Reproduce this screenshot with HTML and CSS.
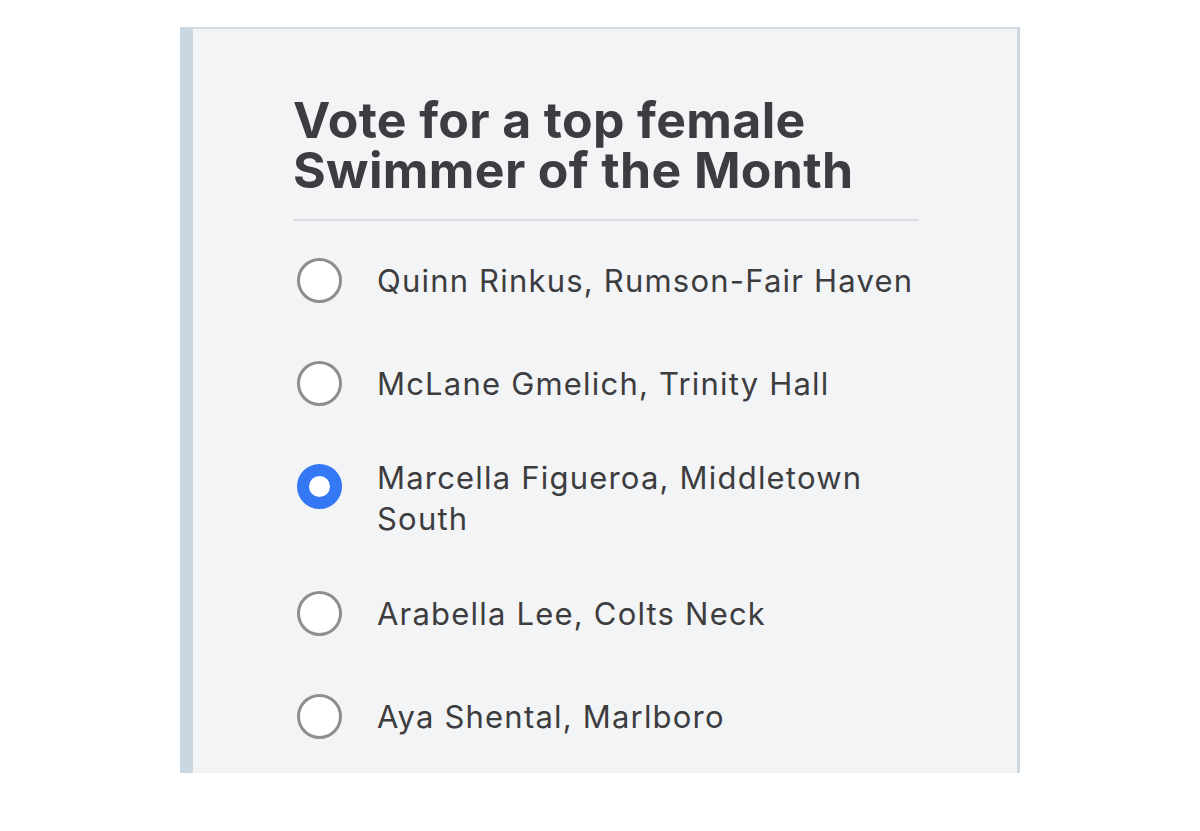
FILE: index.html
```html
<!DOCTYPE html>
<html lang="en">

<head>
    <meta charset="UTF-8">
    <meta name="viewport" content="width=device-width, initial-scale=1.0">
    <title>Swimmer of the Month Poll</title>
    <link rel="stylesheet" href="styles.css">
</head>

<body>

    <div class="poll">
        <h2>Vote for a top female Swimmer of the Month</h2>
        <form id="poll-form" class="options">
            <label class="option">
                <input type="radio" name="swimmer" value="1">
                <span class="radio"></span>
                <span class="name">Quinn Rinkus, Rumson-Fair Haven</span>
            </label>
            <label class="option">
                <input type="radio" name="swimmer" value="2">
                <span class="radio"></span>
                <span class="name">McLane Gmelich, Trinity Hall</span>
            </label>
            <label class="option">
                <input type="radio" name="swimmer" value="3" checked>
                <span class="radio"></span>
                <span class="name">Marcella Figueroa, Middletown South</span>
            </label>
            <label class="option">
                <input type="radio" name="swimmer" value="4">
                <span class="radio"></span>
                <span class="name">Arabella Lee, Colts Neck</span>
            </label>
            <label class="option">
                <input type="radio" name="swimmer" value="5">
                <span class="radio"></span>
                <span class="name">Aya Shental, Marlboro</span>
            </label>
        </form>
    </div>

</body>

</html>
```

FILE: styles.css
```css
body {
    margin: 0;
    background-color: #fff;
    font-family: Inter, "Noto Sans", Arial, sans-serif;
    color: #3c3c3f;
}

.poll {
    width: 840px;
    height: 746px;
    margin: 27px 0 0 180px;
    padding: 0 98px 0 100px;
    box-sizing: border-box;
    background-color: #f3f4f6;
    border-top: 2px solid #d3dbe2;
    border-left: 13px solid #c9d7e2;
    border-right: 3px solid #cdd6de;
}

h2 {
    margin: 0;
    padding: 66px 0 24px;
    font-size: 50px;
    line-height: 50px;
    font-weight: 700;
    letter-spacing: 0.35px;
    color: #3c3d40;
    border-bottom: 2px solid #dcdde0;
}

.options {
    display: flex;
    flex-direction: column;
    gap: 45px;
    padding-top: 30px;
}

.option {
    display: flex;
    align-items: flex-start;
    cursor: pointer;
}

.option input {
    display: none;
}

.radio {
    flex: none;
    width: 84px;
    height: 58px;
    display: flex;
    align-items: center;
    padding-left: 4px;
    box-sizing: border-box;
}

.radio::before {
    content: "";
    width: 45px;
    height: 45px;
    box-sizing: border-box;
    border-radius: 50%;
    border: 3px solid #8e8e91;
    background-color: #fff;
}

.option input:checked + .radio::before {
    border: 12px solid #3478f6;
}

.name {
    min-height: 58px;
    display: flex;
    align-items: center;
    font-size: 31px;
    line-height: 41px;
    letter-spacing: 1.2px;
    color: #3d3d40;
}
```
